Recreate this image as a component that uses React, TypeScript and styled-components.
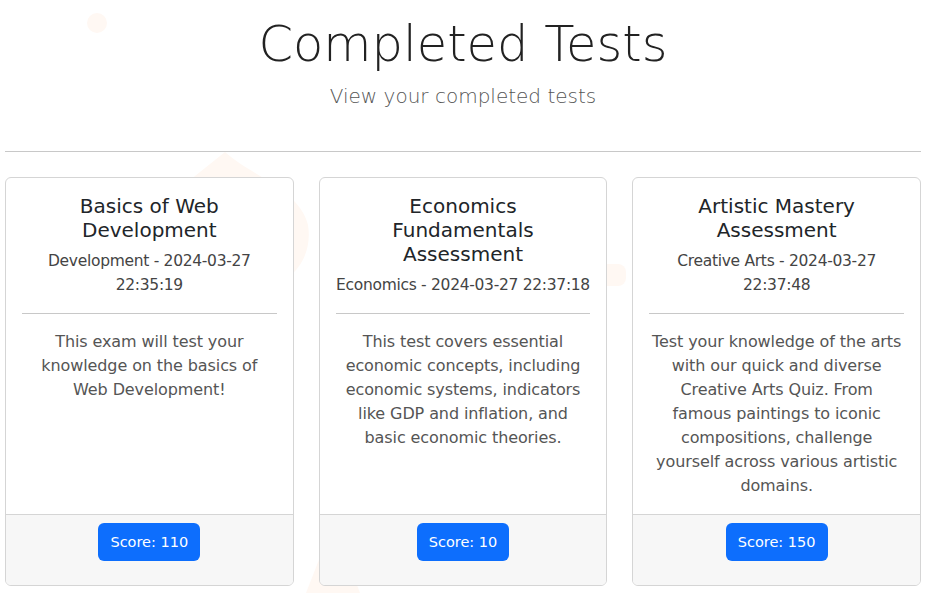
import React from "react";
import styled, { createGlobalStyle } from "styled-components";

const GlobalStyle = createGlobalStyle`
  html, body { margin: 0; padding: 0; background: #ffffff; }
  body { font-family: "DejaVu Sans", "Liberation Sans", sans-serif; color: #212529; }
  * { box-sizing: border-box; }
`;

const Page = styled.div`
  position: relative;
  padding: 0 9px 8px 5px;
  min-height: 593px;
`;

const Backdrop = styled.svg`
  position: absolute;
  inset: 0;
  width: 930px;
  height: 593px;
  z-index: 0;
  pointer-events: none;
`;

const Content = styled.div`
  position: relative;
  z-index: 1;
`;

const Header = styled.header`
  text-align: center;
  padding-top: 15px;
`;

const Title = styled.h1`
  margin: 0;
  font-size: 49.5px;
  line-height: 1.2;
  font-weight: 200;
  color: #222222;
`;

const Subtitle = styled.p`
  margin: 7px 0 0;
  font-size: 20px;
  line-height: 30px;
  font-weight: 200;
  color: #555555;
`;

const Rule = styled.hr`
  margin: 40px 0 25px;
  border: 0;
  border-top: 1px solid #c8c8c8;
`;

const Grid = styled.div`
  display: grid;
  grid-template-columns: repeat(3, 1fr);
  gap: 25px;
`;

const Card = styled.article`
  display: flex;
  flex-direction: column;
  background: #ffffff;
  border: 1px solid #d5d5d5;
  border-radius: 6px;
  overflow: hidden;
`;

const CardBody = styled.div`
  flex: 1;
  padding: 16px;
  text-align: center;
`;

const CardTitle = styled.h5`
  margin: 0 0 7px;
  font-size: 20px;
  line-height: 24px;
  font-weight: 400;
  color: #212529;
`;

const Meta = styled.p`
  margin: 0;
  font-size: 15.5px;
  line-height: 24px;
  letter-spacing: -0.3px;
  color: #444444;
`;

const Divider = styled.hr`
  margin: 16px 0;
  border: 0;
  border-top: 1px solid #c8c8c8;
`;

const Description = styled.p`
  margin: 0;
  font-size: 16px;
  line-height: 24px;
  letter-spacing: -0.1px;
  color: #555555;
`;

const CardFooter = styled.div`
  background: #f7f7f7;
  border-top: 1px solid #d5d5d5;
  padding: 8px 16px 24px;
  text-align: center;
`;

const ScoreButton = styled.button`
  height: 38px;
  padding: 0 12px;
  border: none;
  border-radius: 6px;
  background: #0d6efd;
  color: #ffffff;
  font-family: inherit;
  font-size: 14.5px;
  cursor: pointer;
`;

type Test = {
  title: string;
  category: string;
  date: string;
  description: string;
  score: number;
};

const tests: Test[] = [
  {
    title: "Basics of Web Development",
    category: "Development",
    date: "2024-03-27 22:35:19",
    description: "This exam will test your knowledge on the basics of Web Development!",
    score: 110,
  },
  {
    title: "Economics Fundamentals Assessment",
    category: "Economics",
    date: "2024-03-27 22:37:18",
    description:
      "This test covers essential economic concepts, including economic systems, indicators like GDP and inflation, and basic economic theories.",
    score: 10,
  },
  {
    title: "Artistic Mastery Assessment",
    category: "Creative Arts",
    date: "2024-03-27 22:37:48",
    description:
      "Test your knowledge of the arts with our quick and diverse Creative Arts Quiz. From famous paintings to iconic compositions, challenge yourself across various artistic domains.",
    score: 150,
  },
];

export default function App() {
  return (
    <>
      <GlobalStyle />
      <Page>
        <Backdrop viewBox="0 0 930 593" aria-hidden="true">
          <g fill="#fff8f3">
            <ellipse cx="97" cy="23" rx="10" ry="10" />
            <path d="M225 152 C250 175 300 190 308 225 C312 250 300 268 290 276 L200 300 L190 180 Z" />
            <rect x="590" y="264" width="36" height="22" rx="8" />
            <path d="M322 552 L306 593 L360 593 L340 540 Z" />
          </g>
        </Backdrop>
        <Content>
          <Header>
            <Title>Completed Tests</Title>
            <Subtitle>View your completed tests</Subtitle>
          </Header>
          <Rule />
          <Grid>
            {tests.map((t) => (
              <Card key={t.title}>
                <CardBody>
                  <CardTitle>{t.title}</CardTitle>
                  <Meta>{`${t.category} - ${t.date}`}</Meta>
                  <Divider />
                  <Description>{t.description}</Description>
                </CardBody>
                <CardFooter>
                  <ScoreButton type="button">Score: {t.score}</ScoreButton>
                </CardFooter>
              </Card>
            ))}
          </Grid>
        </Content>
      </Page>
    </>
  );
}
